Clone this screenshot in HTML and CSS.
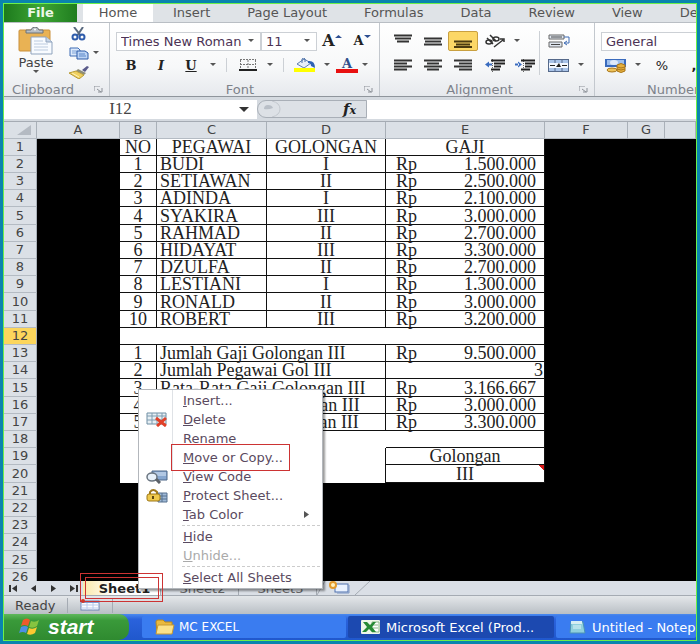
FILE: index.html
```html
<!DOCTYPE html>
<html lang="id">
<head>
<meta charset="utf-8">
<title>Microsoft Excel</title>
<link rel="stylesheet" href="styles.css">
</head>
<body>
<div class="window">
  <nav class="tabs">
    <button class="file">File</button>
    <button class="tab active">Home</button>
    <button class="tab">Insert</button>
    <button class="tab">Page Layout</button>
    <button class="tab">Formulas</button>
    <button class="tab">Data</button>
    <button class="tab">Review</button>
    <button class="tab">View</button>
    <button class="tab">Developer</button>
  </nav>

  <div class="ribbon">
    <section class="group clipboard">
      <div class="clip-tools">
        <button class="paste">
          <svg width="36" height="28" viewBox="0 0 36 28"><rect x="1" y="3" width="31" height="21" rx="1" fill="#e9b254" stroke="#c98f3a"/><path d="M8 6V3h5q1-3 4-3t4 3h4v3z" fill="#b9bfc6" stroke="#6d7278"/><circle cx="17" cy="2.500" r="1" fill="#fff"/><path d="M13 10h15l6 5v12H13z" fill="#f8fbff" stroke="#8fa3bd"/><path d="M28 10v5h6" fill="#c7d5e8" stroke="#8fa3bd"/><path d="M16 14h9M16 17h14M16 20h14M16 23h14" stroke="#bccbdf"/></svg>
          <span>Paste</span>
          <svg class="arrow" width="6" height="4" viewBox="0 0 6 4"><path d="M0 0h6L3 3z" fill="#555"/></svg>
        </button>
        <div class="clip-side">
          <button aria-label="Cut"><svg width="16" height="14" viewBox="0 0 16 14"><path d="M3 0l7 9M12 0L6 9" stroke="#59697f" stroke-width="2" fill="none"/><circle cx="4" cy="10" r="2.500" fill="none" stroke="#2f5cab" stroke-width="2"/><circle cx="11" cy="10" r="2.500" fill="none" stroke="#2f5cab" stroke-width="2"/></svg></button>
          <button aria-label="Copy"><svg width="20" height="13" viewBox="0 0 20 13"><path d="M1 1h8l2 2v6H1z" fill="#dce9fa" stroke="#3e6cb5"/><path d="M3 4h5M3 6h5" stroke="#7fa3d8"/><path d="M8 4h8l3 2v6H8z" fill="#bcd4f5" stroke="#2e5da9"/><path d="M10 7h6M10 9h7" stroke="#5a86c8"/></svg></button>
          <button aria-label="Format Painter"><svg width="20" height="13" viewBox="0 0 20 13"><path d="M13 4l5-4 2 1-4 5z" fill="#5a5a8a"/><path d="M9 3l8 4-2 2-8-4z" fill="#8d8d7a"/><path d="M7 5l8 4-5 4-10-6z" fill="#f0d060" stroke="#b79a36"/><path d="M3 7l7 4" stroke="#fff3b8"/></svg></button>
        </div>
        <svg class="arrow copy-arrow" width="6" height="4" viewBox="0 0 6 4"><path d="M0 0h6L3 3z" fill="#555"/></svg>
      </div>
      <div class="caption"><span>Clipboard</span><svg class="launch" width="9" height="7" viewBox="0 0 9 7"><path d="M0 5V0h6M3 3l4 3M8 2v4H4" stroke="#8b9097" fill="none"/></svg></div>
    </section>

    <section class="group font">
      <div class="row">
        <label class="combo family"><select aria-label="Font"><option>Times New Roman</option></select><svg class="arrow" width="6" height="4" viewBox="0 0 6 4"><path d="M0 0h6L3 3z" fill="#555"/></svg></label>
        <label class="combo size"><select aria-label="Font size"><option>11</option></select><svg class="arrow" width="6" height="4" viewBox="0 0 6 4"><path d="M0 0h6L3 3z" fill="#555"/></svg></label>
        <button class="tool serif grow-font" aria-label="Grow Font">A<svg width="7" height="4" viewBox="0 0 7 4"><path d="M0 3h7L3.500 0z" fill="#2e4f92"/></svg></button>
        <button class="tool serif shrink-font" aria-label="Shrink Font">A<svg width="7" height="4" viewBox="0 0 7 4"><path d="M0 0h7L3.500 3z" fill="#2e4f92"/></svg></button>
      </div>
      <div class="row">
        <button class="tool serif">B</button>
        <button class="tool serif italic">I</button>
        <button class="tool serif under">U</button>
        <svg class="arrow" width="6" height="4" viewBox="0 0 6 4"><path d="M0 0h6L3 3z" fill="#555"/></svg>
        <i class="sep"></i>
        <button class="tool" aria-label="Borders"><svg width="18" height="12" viewBox="0 0 18 12"><path d="M1 .500h16M1 5.500h16M1.500 1v10M9 1v10M16.500 1v10" stroke="#777" stroke-dasharray="2 1" fill="none"/><path d="M0 11h18" stroke="#222" stroke-width="2"/></svg></button>
        <svg class="arrow" width="6" height="4" viewBox="0 0 6 4"><path d="M0 0h6L3 3z" fill="#555"/></svg>
        <i class="sep"></i>
        <button class="tool" aria-label="Fill Color"><svg width="22" height="14" viewBox="0 0 22 14"><path d="M3 6l7-5 7 4-7 5z" fill="#e8eef7" stroke="#5f7fae"/><path d="M8 5V1q2-2 3 0v3" fill="none" stroke="#4a6fa8"/><path d="M14 3q7-1 7 7l-4-2q0-3-3-3z" fill="#2f62b5"/><path d="M0 10h21v4H0z" fill="#ffff00"/></svg></button>
        <svg class="arrow" width="6" height="4" viewBox="0 0 6 4"><path d="M0 0h6L3 3z" fill="#555"/></svg>
        <button class="tool serif font-color" aria-label="Font Color">A</button>
        <svg class="arrow" width="6" height="4" viewBox="0 0 6 4"><path d="M0 0h6L3 3z" fill="#555"/></svg>
      </div>
      <div class="caption"><span>Font</span><svg class="launch" width="9" height="7" viewBox="0 0 9 7"><path d="M0 5V0h6M3 3l4 3M8 2v4H4" stroke="#8b9097" fill="none"/></svg></div>
    </section>

    <section class="group align">
      <div class="align-body">
        <div class="align-rows">
          <div class="row">
            <button class="tool" aria-label="Top Align"><svg width="18" height="14" viewBox="0 0 18 14"><path d="M0 1.500h18M1 4.500h16M3 7.500h12" stroke="#333" stroke-width="2"/></svg></button>
            <button class="tool" aria-label="Middle Align"><svg width="18" height="14" viewBox="0 0 18 14"><path d="M0 4.500h18M1 7.500h16M0 10.500h18" stroke="#333" stroke-width="2"/></svg></button>
            <button class="tool on" aria-label="Bottom Align"><svg width="18" height="14" viewBox="0 0 18 14"><path d="M0 7.500h18M2 10.500h14M0 13h18" stroke="#4b3a10" stroke-width="2"/></svg></button>
            <button class="tool orient" aria-label="Orientation"><svg width="20" height="14" viewBox="0 0 20 14"><g fill="none" stroke="#333" stroke-width="1.500"><ellipse cx="4" cy="8" rx="3" ry="2"/><path d="M2 4l6 6M5 1l6 6"/><ellipse cx="11" cy="5" rx="3" ry="2"/><path d="M9 13l9-7M15 5h4v3"/></g></svg></button>
            <svg class="arrow" width="6" height="4" viewBox="0 0 6 4"><path d="M0 0h6L3 3z" fill="#555"/></svg>
          </div>
          <div class="row">
            <button class="tool" aria-label="Align Left"><svg width="18" height="12" viewBox="0 0 18 12"><path d="M0 1.500h18M0 4.500h13M0 7.500h18M0 10.500h13" stroke="#333" stroke-width="2"/></svg></button>
            <button class="tool" aria-label="Center"><svg width="18" height="12" viewBox="0 0 18 12"><path d="M0 1.500h18M3 4.500h12M0 7.500h18M3 10.500h12" stroke="#333" stroke-width="2"/></svg></button>
            <button class="tool" aria-label="Align Right"><svg width="18" height="12" viewBox="0 0 18 12"><path d="M0 1.500h18M5 4.500h13M0 7.500h18M5 10.500h13" stroke="#333" stroke-width="2"/></svg></button>
            <button class="tool indent" aria-label="Decrease Indent"><svg width="20" height="13" viewBox="0 0 20 13"><path d="M0 5.500l4-3v6zM3 4.500h4v2H3z" fill="#3a6cc0"/><path d="M7.500 0v13" stroke="#666" stroke-dasharray="1 1"/><path d="M6 1.500h14M9 4.500h11M9 7.500h7M6 10.500h9" stroke="#222" stroke-width="2"/></svg></button>
            <button class="tool" aria-label="Increase Indent"><svg width="20" height="13" viewBox="0 0 20 13"><path d="M7 5.500l-4-3v6zM0 4.500h4v2H0z" fill="#3a6cc0"/><path d="M8.500 0v13" stroke="#666" stroke-dasharray="1 1"/><path d="M6 1.500h14M10 4.500h10M10 7.500h7M6 10.500h9" stroke="#222" stroke-width="2"/></svg></button>
          </div>
        </div>
        <i class="sep tall"></i>
        <div class="align-rows">
          <div class="row">
            <button class="tool" aria-label="Wrap Text"><svg width="22" height="14" viewBox="0 0 22 14"><path d="M1 1h15v4H1zM1 8h13v5H1z" fill="#dfe6f0" stroke="#666"/><path d="M3 3h11M3 10.500h9" stroke="#444"/><path d="M16 3h5v6h-4M19 7l-3 2 3 2" fill="none" stroke="#3c6ab4"/></svg></button>
          </div>
          <div class="row">
            <button class="tool" aria-label="Merge"><svg width="22" height="13" viewBox="0 0 22 13"><rect x=".500" y=".500" width="20" height="12" fill="#a9c3e8" stroke="#55698a"/><path d="M1 4h19v5H1z" fill="#f4f8ff"/><path d="M7 1v3M14 1v3M7 9v3M14 9v3" stroke="#55698a"/><path d="M2 6.500h5M14 6.500h5" stroke="#222"/><path d="M8 8l3-4 2 4z" fill="#222"/></svg></button>
            <svg class="arrow" width="6" height="4" viewBox="0 0 6 4"><path d="M0 0h6L3 3z" fill="#555"/></svg>
          </div>
        </div>
      </div>
      <div class="caption"><span>Alignment</span><svg class="launch" width="9" height="7" viewBox="0 0 9 7"><path d="M0 5V0h6M3 3l4 3M8 2v4H4" stroke="#8b9097" fill="none"/></svg></div>
    </section>

    <section class="group number">
      <div class="row">
        <label class="combo format"><select aria-label="Number format"><option>General</option></select></label>
      </div>
      <div class="row">
        <button class="tool" aria-label="Currency"><svg width="22" height="15" viewBox="0 0 22 15"><rect x="0" y="1" width="21" height="8" fill="#3a6bbd"/><rect x="2" y="2" width="17" height="5" fill="#9fc0ee"/><ellipse cx="9" cy="4.500" rx="4" ry="2.500" fill="#dfeafb"/><path d="M12 7q4-3 8 0v6q-4 3-8 0z" fill="#e6b03e" stroke="#a9761c"/><path d="M12 9q4 2 8 0M12 11q4 2 8 0" stroke="#a9761c" fill="none"/><ellipse cx="7" cy="12" rx="5" ry="2" fill="#edc25a" stroke="#a9761c"/></svg></button>
        <svg class="arrow" width="6" height="4" viewBox="0 0 6 4"><path d="M0 0h6L3 3z" fill="#555"/></svg>
        <button class="tool percent">%</button>
        <button class="tool comma">,</button>
      </div>
      <div class="caption"><span>Number</span></div>
    </section>
  </div>

  <div class="formula-bar">
    <input class="name-box" aria-label="Name box" value="I12">
    <svg class="name-arrow" width="10" height="5" viewBox="0 0 10 5"><path d="M0 0h10L5 5z" fill="#333"/></svg>
    <div class="fx"><svg width="24" height="16" viewBox="0 0 24 16"><path d="M14 0Q22 2 22 8t-8 8" fill="none" stroke="#c3c8ce"/><path d="M6 8q0-4 4-4t5 3q-5 2-9 1z" fill="#b9bfc7"/></svg><span>f<small>x</small></span></div>
    <input class="formula" aria-label="Formula">
  </div>

  <main class="sheet">
    <table>
      <colgroup><col class="c-head"><col class="c-a"><col class="c-b"><col class="c-c"><col class="c-d"><col class="c-e"><col class="c-a"><col class="c-b"><col></colgroup>
      <thead>
        <tr><th class="corner"><svg width="14" height="10" viewBox="0 0 14 10"><path d="M14 0v10H0z" fill="#b4bac2"/></svg></th><th>A</th><th>B</th><th>C</th><th>D</th><th>E</th><th>F</th><th>G</th><th></th></tr>
      </thead>
      <tbody>
        <tr><th>1</th><td></td><td class="b">NO</td><td class="b">PEGAWAI</td><td class="b">GOLONGAN</td><td class="b">GAJI</td></tr>
        <tr><th>2</th><td></td><td class="b">1</td><td class="b left">BUDI</td><td class="b">I</td><td class="b"><div class="money"><span>Rp</span><span>1.500.000</span></div></td></tr>
        <tr><th>3</th><td></td><td class="b">2</td><td class="b left">SETIAWAN</td><td class="b">II</td><td class="b"><div class="money"><span>Rp</span><span>2.500.000</span></div></td></tr>
        <tr><th>4</th><td></td><td class="b">3</td><td class="b left">ADINDA</td><td class="b">I</td><td class="b"><div class="money"><span>Rp</span><span>2.100.000</span></div></td></tr>
        <tr><th>5</th><td></td><td class="b">4</td><td class="b left">SYAKIRA</td><td class="b">III</td><td class="b"><div class="money"><span>Rp</span><span>3.000.000</span></div></td></tr>
        <tr><th>6</th><td></td><td class="b">5</td><td class="b left">RAHMAD</td><td class="b">II</td><td class="b"><div class="money"><span>Rp</span><span>2.700.000</span></div></td></tr>
        <tr><th>7</th><td></td><td class="b">6</td><td class="b left">HIDAYAT</td><td class="b">III</td><td class="b"><div class="money"><span>Rp</span><span>3.300.000</span></div></td></tr>
        <tr><th>8</th><td></td><td class="b">7</td><td class="b left">DZULFA</td><td class="b">II</td><td class="b"><div class="money"><span>Rp</span><span>2.700.000</span></div></td></tr>
        <tr><th>9</th><td></td><td class="b">8</td><td class="b left">LESTIANI</td><td class="b">I</td><td class="b"><div class="money"><span>Rp</span><span>1.300.000</span></div></td></tr>
        <tr><th>10</th><td></td><td class="b">9</td><td class="b left">RONALD</td><td class="b">II</td><td class="b"><div class="money"><span>Rp</span><span>3.000.000</span></div></td></tr>
        <tr><th>11</th><td></td><td class="b">10</td><td class="b left">ROBERT</td><td class="b">III</td><td class="b"><div class="money"><span>Rp</span><span>3.200.000</span></div></td></tr>
        <tr><th class="current">12</th><td></td><td class="b" colspan="4"></td></tr>
        <tr><th>13</th><td></td><td class="b">1</td><td class="b left" colspan="2">Jumlah Gaji Golongan III</td><td class="b"><div class="money"><span>Rp</span><span>9.500.000</span></div></td></tr>
        <tr><th>14</th><td></td><td class="b">2</td><td class="b left" colspan="2">Jumlah Pegawai Gol III</td><td class="b right">3</td></tr>
        <tr><th>15</th><td></td><td class="b">3</td><td class="b left" colspan="2">Rata-Rata Gaji Golongan III</td><td class="b"><div class="money"><span>Rp</span><span>3.166.667</span></div></td></tr>
        <tr><th>16</th><td></td><td class="b">4</td><td class="b left" colspan="2">Gaji Terendah Golongan III</td><td class="b"><div class="money"><span>Rp</span><span>3.000.000</span></div></td></tr>
        <tr><th>17</th><td></td><td class="b">5</td><td class="b left" colspan="2">Gaji Tertinggi Golongan III</td><td class="b"><div class="money"><span>Rp</span><span>3.300.000</span></div></td></tr>
        <tr><th>18</th><td></td><td class="w" colspan="3"></td><td class="b"></td></tr>
        <tr><th>19</th><td></td><td class="w edge" colspan="3"></td><td class="b">Golongan</td></tr>
        <tr><th>20</th><td></td><td class="w edge" colspan="3"></td><td class="b noted">III</td></tr>
        <tr><th>21</th></tr>
        <tr><th>22</th></tr>
        <tr><th>23</th></tr>
        <tr><th>24</th></tr>
        <tr><th>25</th></tr>
        <tr><th>26</th></tr>
      </tbody>
    </table>
  </main>

  <div class="sheet-tabs">
    <div class="nav-arrows">
      <button aria-label="First sheet"><svg width="9" height="7" viewBox="0 0 9 7"><path d="M1 0v7" stroke="#333" stroke-width="2"/><path d="M8 0v7L3 3.500z" fill="#333"/></svg></button>
      <button aria-label="Previous sheet"><svg width="9" height="7" viewBox="0 0 9 7"><path d="M7 0v7L2 3.500z" fill="#333"/></svg></button>
      <button aria-label="Next sheet"><svg width="9" height="7" viewBox="0 0 9 7"><path d="M2 0v7l5-3.500z" fill="#333"/></svg></button>
      <button aria-label="Last sheet"><svg width="9" height="7" viewBox="0 0 9 7"><path d="M8 0v7" stroke="#333" stroke-width="2"/><path d="M1 0v7l5-3.500z" fill="#333"/></svg></button>
    </div>
    <button class="sheet-tab selected">Sheet1<i class="mark outer"></i><i class="mark inner"></i></button>
    <button class="sheet-tab">Sheet2</button>
    <button class="sheet-tab">Sheet3</button>
    <button class="new-sheet" aria-label="Insert sheet"><svg width="54" height="14" viewBox="0 0 54 14"><path d="M0 14L8 0M38 14L53 0" stroke="#a5abb3" fill="none"/><rect x="18" y="3" width="13" height="8" fill="#eaf2ff" stroke="#4e70ad"/><path d="M20 12h12V4" stroke="#7d97c6" fill="none"/><circle cx="16" cy="4" r="3" fill="#fff2c0" stroke="#e39a2b" stroke-width="2"/></svg></button>

    <div class="menu" role="menu">
      <button role="menuitem"><span><u>I</u>nsert...</span></button>
      <button role="menuitem"><svg width="22" height="15" viewBox="0 0 22 15"><path d="M1 1h19v11H1z" fill="#e6eff4" stroke="#6f8ea3"/><path d="M1 4h19M1 8h19M6 1v11M11 1v11M16 1v11" stroke="#7f9cb0"/><path d="M10 6l10 8M20 6l-9 8" stroke="#e04028" stroke-width="3"/></svg><span><u>D</u>elete</span></button>
      <button role="menuitem"><span><u>R</u>ename</span></button>
      <button role="menuitem" class="framed"><span><u>M</u>ove or Copy...</span></button>
      <button role="menuitem"><svg width="22" height="14" viewBox="0 0 22 14"><path d="M6 1h15v9H6z" fill="#86a6cf" stroke="#4d6788"/><path d="M8 3h12M8 5h12" stroke="#dce9f8"/><ellipse cx="6" cy="7" rx="5" ry="4" fill="#e8f1fa" stroke="#6a7580" stroke-width="1.500"/><path d="M10 9l4 4" stroke="#5c6269" stroke-width="3"/></svg><span><u>V</u>iew Code</span></button>
      <button role="menuitem"><svg width="22" height="14" viewBox="0 0 22 14"><path d="M12 4h9v9h-9z" fill="#9fb9d6" stroke="#56718f"/><path d="M12 7h9M12 10h9M16 4v9" stroke="#56718f"/><path d="M4 6V3q3-4 7 0v3" fill="none" stroke="#a07a1e" stroke-width="2"/><rect x="1" y="5" width="13" height="7" rx="2" fill="#efc94c" stroke="#9c7717"/><path d="M7 7v3" stroke="#5e4710" stroke-width="2"/></svg><span><u>P</u>rotect Sheet...</span></button>
      <button role="menuitem"><span><u>T</u>ab Color</span><svg class="submenu" width="5" height="7" viewBox="0 0 5 7"><path d="M0 0v7l5-3.500z" fill="#555"/></svg></button>
      <hr>
      <button role="menuitem"><span><u>H</u>ide</span></button>
      <button role="menuitem" disabled><span><u>U</u>nhide...</span></button>
      <hr>
      <button role="menuitem"><span><u>S</u>elect All Sheets</span></button>
    </div>
  </div>

  <div class="status">
    <span class="ready">Ready</span>
    <svg width="20" height="12" viewBox="0 0 20 12"><rect x="1" y="2" width="18" height="9" fill="#fafcff" stroke="#6d84b5"/><path d="M1 3h18" stroke="#7f9bd0" stroke-width="2"/><path d="M1 6h18M1 9h18M7 4v7M13 4v7" stroke="#bccaec"/><circle cx="3" cy="2" r="2" fill="#d33a22"/></svg>
    <i class="divider"></i>
  </div>

  <footer class="taskbar">
    <button class="start"><svg width="24" height="18" viewBox="0 0 24 18"><path d="M5 2q4-3 7 0l-2 6q-4-2-7 0z" fill="#ee5a2c"/><path d="M13 3q4 2 8-1l-2 6q-4 3-8 1z" fill="#86c440"/><path d="M3 9q4-2 7 0l-2 6q-3-2-7 0z" fill="#4d8fe6"/><path d="M11 10q4 2 8-1l-2 6q-4 3-8 1z" fill="#fbc931"/></svg><span>start</span></button>
    <button class="task folder"><svg width="20" height="16" viewBox="0 0 20 16"><path d="M1 3q0-2 2-2h5l2 2h7v11H2z" fill="#e9b93f" stroke="#b98a1f"/><path d="M3 6h16l-2 9H1z" fill="#fbe28a" stroke="#c79a34"/></svg><span>MC EXCEL</span></button>
    <button class="task current"><svg width="19" height="14" viewBox="0 0 19 14"><rect width="19" height="14" rx="1" fill="#eef7ea"/><path d="M11 2h7v10h-7z" fill="#fff" stroke="#8ab989"/><path d="M12 5h5M12 8h5" stroke="#8ab989"/><path d="M2 2h4l3 3 3-3h3l-4 5 4 5h-4l-3-3-3 3H1l5-5z" fill="#258a35"/></svg><span>Microsoft Excel (Prod...</span></button>
    <button class="task notepad"><svg width="17" height="14" viewBox="0 0 17 14"><path d="M2 2h12l2 11H1z" fill="#8fd0dd" stroke="#4a93b4"/><path d="M2 1h11v3H2z" fill="#d6eef2"/><path d="M4 6h8M4 8h8" stroke="#dff5f8"/></svg><span>Untitled - Notepad</span></button>
  </footer>
</div>
</body>
</html>
```
FILE: styles.css
```css
* { box-sizing: border-box; }

body {
  margin: 0;
  background: #0a84ae;
  font-family: "DejaVu Sans", sans-serif;
  font-size: 13px;
  color: #444;
}

button, input, select {
  margin: 0;
  padding: 0;
  border: 0;
  border-radius: 0;
  background: none;
  font: inherit;
  color: inherit;
}

svg { display: block; flex: none; }

.window {
  display: flex;
  flex-direction: column;
  height: calc(100vh - 6px);
  margin: 3px;
  border: 1px solid #6cf04a;
  overflow: hidden;
}

/* Ribbon tabs */
.tabs {
  display: flex;
  flex: none;
  height: 19px;
  background: #dfe3e7;
  border-bottom: 1px solid #b9bec4;
  overflow: hidden;
}

.file {
  flex: none;
  width: 73px;
  margin-right: 6px;
  background: linear-gradient(90deg, #1d7a1d, #3ea535 50%, #1f7d1f);
  color: #eef8ea;
  font-weight: bold;
  line-height: 18px;
}

.tab {
  flex: none;
  padding: 0 19px 0 18px;
  line-height: 18px;
  color: #555;
}

.tab.active {
  width: 70px;
  padding: 0;
  margin-right: 2px;
  background: #fff;
}

/* Ribbon */
.ribbon {
  display: flex;
  flex: none;
  height: 74px;
  background: linear-gradient(#fff, #f7f8f9 60%, #e6e9ed);
  border-bottom: 1px solid #8f959c;
}

.group {
  display: flex;
  flex: none;
  flex-direction: column;
  padding-top: 6px;
  border-right: 1px solid #c3c8ce;
}

.group.clipboard { width: 106px; padding-top: 4px; }
.group.font { width: 270px; padding-left: 6px; }
.group.align { width: 215px; }
.group.number { flex: 1; min-width: 0; padding-left: 6px; overflow: hidden; border: 0; }

.row {
  display: flex;
  align-items: center;
  height: 24px;
}

.caption {
  display: flex;
  align-items: center;
  height: 14px;
  margin-top: auto;
  color: #7d828a;
}

.caption span { flex: 1; text-align: center; }
.launch { margin-right: 6px; }
.clipboard .caption span { text-align: left; padding-left: 8px; }
.number .caption span { text-align: left; padding-left: 46px; }

.arrow { margin: 0 4px; }

.clip-tools { display: flex; }

.paste {
  display: flex;
  flex-direction: column;
  align-items: center;
  width: 64px;
  line-height: 15px;
}

.clip-side {
  display: flex;
  flex-direction: column;
  justify-content: space-between;
  width: 22px;
  height: 52px;
}

.clip-side button { display: flex; justify-content: center; }
.copy-arrow { margin: 24px 0 0 3px; }

.combo {
  display: flex;
  align-items: center;
  height: 19px;
  border: 1px solid #ccd0d5;
  background: #fff;
}

.combo select {
  flex: 1;
  min-width: 0;
  padding-left: 4px;
  appearance: none;
  color: #4c3355;
}

.combo .arrow { margin-right: 6px; }
.combo.family { width: 145px; }
.combo.size { width: 56px; }
.combo.format { flex: 1; width: 100%; border-right: 0; }

.tool {
  display: flex;
  flex: none;
  align-items: center;
  justify-content: center;
  width: 30px;
  height: 20px;
  color: #222;
}

.tool.on {
  border: 1px solid #c9a040;
  border-radius: 2px;
  background: #fcd766;
}

.serif {
  font-family: "DejaVu Serif", serif;
  font-weight: bold;
}

.italic { font-style: italic; }
.under { text-decoration: underline; }

.grow-font {
  align-items: flex-start;
  font-size: 16px;
  line-height: 20px;
}

.shrink-font { align-items: flex-start; line-height: 20px; }
.grow-font svg, .shrink-font svg { margin-top: 4px; }

.sep { width: 1px; height: 14px; margin: 0 6px; background: #ccd0d5; }
.sep.tall { height: 44px; margin: 2px 4px; }

.font-color {
  width: 22px;
  height: 15px;
  margin-left: 2px;
  border-bottom: 4px solid #e81010;
  color: #304f8c;
  line-height: 11px;
}

.align-body { display: flex; }
.align-rows:first-child { width: 155px; padding-left: 8px; }
.orient { margin-left: 2px; }
.indent { margin-left: 2px; }
.percent { width: 34px; }
.comma { font-weight: bold; }

/* Formula bar */
.formula-bar {
  display: flex;
  flex: none;
  align-items: center;
  height: 25px;
  padding: 3px 0;
  background: #d5dae0;
  border-bottom: 1px solid #a5abb3;
}

.name-box {
  width: 233px;
  height: 19px;
  background: #fff;
  font-family: "Liberation Serif", serif;
  font-size: 17px;
  text-align: center;
}

.name-arrow {
  box-sizing: content-box;
  padding: 7px 8px 7px 2px;
  background: #fff;
}

.fx {
  display: flex;
  align-items: center;
  justify-content: space-between;
  width: 110px;
  height: 18px;
  padding-right: 10px;
  border: 1px solid #a9afb7;
  border-radius: 9px 0 0 9px;
  background: #dde1e6;
  color: #222;
  font: italic bold 15px "DejaVu Serif", serif;
}

.fx small { font-size: 11px; }

.formula { flex: 1; min-width: 0; height: 19px; background: #fff; }

/* Worksheet */
.sheet {
  flex: 1;
  min-height: 0;
  background: #000;
  overflow: hidden;
}

table {
  width: 100%;
  table-layout: fixed;
  border-spacing: 0;
  line-height: 16px;
}

.c-head { width: 33px; }
.c-a { width: 83px; }
.c-b { width: 37px; }
.c-c { width: 110px; }
.c-d { width: 119px; }
.c-e { width: 159px; }

tr { height: 17px; }
tbody tr:nth-child(5n) { height: 18px; }

th {
  padding: 0;
  border-right: 1px solid #a9b0b8;
  border-bottom: 1px solid #b4bbc3;
  background: #dbe0e6;
  font-weight: normal;
}

.corner svg { margin: 0 5px 0 auto; }
th.current { background: #fcd65c; }

td {
  padding: 0;
  font: 18px/16px "Liberation Serif", serif;
  color: #222;
  text-align: center;
  white-space: nowrap;
}

.b {
  border-right: 1px solid #111;
  border-bottom: 1px solid #111;
  background: #fff;
}

.w { background: #fff; }
.edge { border-right: 1px solid #111; }
.left { padding-left: 3px; text-align: left; }
.right { padding-right: 1px; text-align: right; }

.money {
  display: flex;
  justify-content: space-between;
  padding: 0 8px 0 10px;
}

.noted { background: linear-gradient(45deg, transparent 50%, #d81818 50%) top right / 6px 6px no-repeat #fff; }

/* Sheet tabs */
.sheet-tabs {
  position: relative;
  display: flex;
  flex: none;
  height: 14px;
  background: #dadfe6;
}

.nav-arrows { display: flex; width: 79px; }

.nav-arrows button {
  display: flex;
  flex: 1;
  align-items: center;
  justify-content: center;
}

.sheet-tab {
  width: 78px;
  height: 14px;
  padding-left: 6px;
  border-right: 1px solid #a5abb3;
  line-height: 13px;
  color: #666;
}

.sheet-tab.selected {
  position: relative;
  background: linear-gradient(90deg, #fbe9a8, #fff 40%);
  color: #222;
  font-weight: bold;
}

.mark {
  position: absolute;
  z-index: 3;
  border: 1px solid #cc3333;
}

.mark.outer { inset: -8px -3px -7px -3px; }
.mark.inner { inset: -4px 1px -4px 2px; }

/* Context menu */
.menu {
  position: absolute;
  z-index: 2;
  left: 134px;
  bottom: 6px;
  display: flex;
  flex-direction: column;
  width: 185px;
  padding: 1px;
  border: 1px solid #b3b7bc;
  background: linear-gradient(90deg, #fff 33px, #dfe2e6 33px, #dfe2e6 34px, #fff 34px);
  box-shadow: 2px 2px 2px rgba(0, 0, 0, 0.4);
}

.menu button {
  display: grid;
  grid-template-columns: 43px 1fr 17px;
  align-items: center;
  height: 19px;
  text-align: left;
  color: #5a4a60;
}

.menu button svg { margin-left: 6px; }
.menu button span { grid-column: 2; }
.menu button svg:first-child { grid-column: 1; }
.menu button .submenu { margin: 0; }
.menu button:disabled { color: #aaa; }

.menu hr {
  width: 138px;
  height: 3px;
  margin: 0 0 0 42px;
  border: 0;
  background: repeating-linear-gradient(90deg, #ccc 0 3px, transparent 3px 5px) 0 1px / 100% 1px no-repeat;
}

.framed { position: relative; }

.framed::after {
  content: "";
  position: absolute;
  inset: -4px 31px -4px 31px;
  border: 1px solid #cc3333;
}

/* Status bar */
.status {
  display: flex;
  flex: none;
  align-items: center;
  height: 19px;
  background: linear-gradient(#e4e7ea, #b9bfc5);
  border-top: 1px solid #a5abb3;
}

.ready {
  width: 64px;
  margin-right: 12px;
  padding-left: 11px;
  border-right: 1px solid #a5abb3;
}

.divider { width: 1px; height: 15px; margin-left: 12px; background: #a5abb3; }

/* Taskbar */
.taskbar {
  display: flex;
  flex: none;
  height: 26px;
  background: linear-gradient(#4a8af0, #2a62dc 20%, #2058cc);
  color: #fff;
}

.start {
  display: flex;
  flex: none;
  align-items: center;
  gap: 6px;
  width: 125px;
  margin-right: 13px;
  padding-left: 14px;
  border-radius: 0 10px 10px 0;
  background: linear-gradient(#5fb85c, #3a9a3a 25%, #2f8a30);
  font: italic bold 21px "Liberation Sans", sans-serif;
}

.task {
  display: flex;
  flex: none;
  align-items: center;
  gap: 6px;
  width: 204px;
  margin: 2px 2px 2px 0;
  padding-left: 13px;
  border-radius: 2px;
  background: #3a7cf0;
  white-space: nowrap;
}

.folder { gap: 4px; font-size: 12px; }
.task.current { width: 206px; background: #1c49b0; }
.notepad { flex: 1 1 0; min-width: 0; margin-right: 0; overflow: hidden; }
```
